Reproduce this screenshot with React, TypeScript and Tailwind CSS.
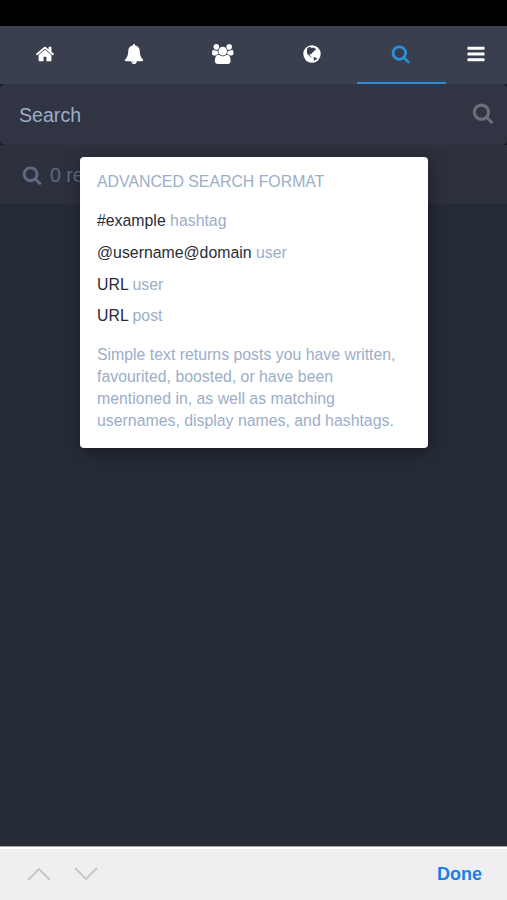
import type { ReactNode } from "react";

function Glyph({ className, viewBox = "0 0 1792 1792", children }: { className: string; viewBox?: string; children: ReactNode }) {
  return (
    <svg className={`block shrink-0 ${className}`} viewBox={viewBox} fill="currentColor" aria-hidden="true">
      {children}
    </svg>
  );
}

const SEARCH =
  "M1216 832q0-185-131.5-316.5t-316.5-131.5-316.5 131.5-131.5 316.5 131.5 316.5 316.5 131.5 316.5-131.5 131.5-316.5zm512 832q0 52-38 90t-90 38q-54 0-90-38l-343-342q-179 124-399 124-143 0-273.5-55.5t-225-150-150-225-55.5-273.5 55.5-273.5 150-225 225-150 273.5-55.5 273.5 55.5 225 150 150 225 55.5 273.5q0 220-124 399l343 343q37 37 37 90z";

function SearchIcon({ className }: { className: string }) {
  return (
    <Glyph className={className}>
      <path d={SEARCH} />
    </Glyph>
  );
}

function Tab({ active = false, children }: { active?: boolean; children: ReactNode }) {
  return (
    <a className={`flex h-[58px] flex-1 items-center justify-center border-b-2 ${active ? "border-[#2b90d9] text-[#2b90d9]" : "border-[#393f4f] text-white"}`}>
      {children}
    </a>
  );
}

function Hint({ term, kind }: { term: string; kind: string }) {
  return (
    <li className="h-[31.8px]">
      <span className="text-[#282c37]">{term}</span> {kind}
    </li>
  );
}

export default function App() {
  return (
    <div className="flex h-[900px] w-[507px] flex-col overflow-hidden bg-[#282c37] font-['Liberation_Sans',Arial,sans-serif]">
      <div className="h-[26px] shrink-0 bg-black" />
      <nav className="flex h-[58px] shrink-0 bg-[#393f4f]">
        <Tab>
          <Glyph className="size-[20px]">
            <path d="M1472 992v480q0 26-19 45t-45 19h-384v-384h-256v384h-384q-26 0-45-19t-19-45v-480q0-1 .5-3t.5-3l575-474 575 474q1 2 1 6zm223-69l-62 74q-8 9-21 11h-3q-13 0-21-7l-692-577-692 577q-12 8-24 7-13-2-21-11l-62-74q-8-10-7-23.5t11-21.5l719-599q32-26 76-26t76 26l244 204v-195q0-14 9-23t23-9h192q14 0 23 9t9 23v408l219 182q10 8 11 21.5t-7 23.5z" />
          </Glyph>
        </Tab>
        <Tab>
          <Glyph className="size-[20px]">
            <path d="M912 1696q0-16-16-16-59 0-101.5-42.5t-42.5-101.5q0-16-16-16t-16 16q0 73 51.5 124.5t124.5 51.5q16 0 16-16zm816-288q0 52-38 90t-90 38h-448q0 106-75 181t-181 75-181-75-75-181h-448q-52 0-90-38t-38-90q50-42 91-88t85-119.5 74.5-158.5 50-206 19.5-260q0-152 117-282.5t307-158.5q-8-19-8-39 0-40 28-68t68-28 68 28 28 68q0 20-8 39 190 28 307 158.5t117 282.5q0 139 19.5 260t50 206 74.5 158.5 85 119.5 91 88z" />
          </Glyph>
        </Tab>
        <Tab>
          <Glyph className="h-[20px] w-[21.5px]" viewBox="0 0 1920 1792">
            <path d="M593 896q-162 5-265 128h-134q-82 0-138-40.5t-56-118.5q0-353 124-353 6 0 43.5 21t97.5 42.5 119 21.5q67 0 133-23-5 37-5 66 0 139 81 256zm1071 637q0 120-73 189.5t-194 69.5h-874q-121 0-194-69.5t-73-189.5q0-53 3.5-103.5t14-109 26.5-108.5 43-97.5 62-81 85.5-53.5 111.5-20q10 0 43 21.5t73 48 107 48 135 21.5 135-21.5 107-48 73-48 43-21.5q61 0 111.5 20t85.5 53.5 62 81 43 97.5 26.5 108.5 14 109 3.5 103.5zm-1024-1277q0 106-75 181t-181 75-181-75-75-181 75-181 181-75 181 75 75 181zm704 384q0 159-112.5 271.5t-271.5 112.5-271.5-112.5-112.5-271.5 112.5-271.5 271.5-112.5 271.5 112.5 112.5 271.5zm576 225q0 78-56 118.5t-138 40.5h-134q-103-123-265-128 81-117 81-256 0-29-5-66 66 23 133 23 59 0 119-21.5t97.5-42.5 43.5-21q124 0 124 353zm-128-609q0 106-75 181t-181 75-181-75-75-181 75-181 181-75 181 75 75 181z" />
          </Glyph>
        </Tab>
        <Tab>
          <Glyph className="size-[18px]" viewBox="0 0 18 18">
            <circle cx="9" cy="9" r="8.7" />
            <path fill="#393f4f" d="M4.2 3.2 6.2 2l1.7.3.8 1 1.3-.7 1.5.5 1.7 1.1-.7.8-1.3.2.3 1-1.5.7-1 1.2-.7 1.2-1.2-.2-.7.8 1 .8.8 1.2 1.2.1-.2.6-1.7-.5-1.4-1.5-1.3-.9-.8-1.9-.1-2.2zM10.3 13l1.2-.7 1.8.5.8.8-1.8 1.6-1.6.5.3-1.5z" />
          </Glyph>
        </Tab>
        <Tab active>
          <SearchIcon className="mr-[1px] size-[19.5px]" />
        </Tab>
        <a className="flex h-[58px] w-[61px] items-center justify-center border-b-2 border-[#393f4f] pr-[1px] text-white">
          <Glyph className="size-[20px]">
            <path d="M1664 1344v128q0 26-19 45t-45 19h-1408q-26 0-45-19t-19-45v-128q0-26 19-45t45-19h1408q26 0 45 19t19 45zm0-512v128q0 26-19 45t-45 19h-1408q-26 0-45-19t-19-45v-128q0-26 19-45t45-19h1408q26 0 45 19t19 45zm0-512v128q0 26-19 45t-45 19h-1408q-26 0-45-19t-19-45v-128q0-26 19-45t45-19h1408q26 0 45 19t19 45z" />
          </Glyph>
        </a>
      </nav>

      <div className="shrink-0 bg-[#171b24]">
        <label className="flex h-[61px] items-center justify-between rounded-[5px] bg-[#313543] pr-[13px] pl-[19px]">
          <span className="pt-[2px] text-[19.6px] text-[#9baec8]">Search</span>
          <SearchIcon className="mb-[3px] size-[22px] text-[#696e7b]" />
        </label>
      </div>

      <main className="relative min-h-0 flex-1 bg-[#262c36]">
        <header className="flex h-[59px] items-center gap-[8px] bg-[#2d313d] pl-[22px] text-[19.6px] text-[#606984]">
          <SearchIcon className="size-[20px]" />
          <span className="pt-[2px]">0 results</span>
        </header>
        <section className="absolute top-[12px] left-[80px] h-[291px] w-[348px] rounded-[4px] bg-white px-[17px] pt-[14px] text-[15.85px] leading-[22px] text-[#9baec8] shadow-[2px_4px_18px_rgba(0,0,0,0.4)]">
          <h4 className="mb-[17px]">ADVANCED SEARCH FORMAT</h4>
          <ul className="mb-[7px]">
            <Hint term="#example" kind="hashtag" />
            <Hint term="@username@domain" kind="user" />
            <Hint term="URL" kind="user" />
            <Hint term="URL" kind="post" />
          </ul>
          <p>
            Simple text returns posts you have written,
            <br />
            favourited, boosted, or have been
            <br />
            mentioned in, as well as matching
            <br />
            usernames, display names, and hashtags.
          </p>
        </section>
      </main>

      <footer className="flex h-[54px] shrink-0 items-center justify-between border-t border-[#a4a6a9] bg-[#efeff1] pr-[25px] pl-[27px] shadow-[inset_0_2px_0_#fff]">
        <div className="flex gap-[23px] text-[#c5c6c8]">
          <svg className="block h-[14px] w-[24px]" viewBox="0 0 24 14" fill="none" stroke="currentColor" strokeWidth="1.8">
            <path d="M1 13 12 2l11 11" />
          </svg>
          <svg className="block h-[14px] w-[24px]" viewBox="0 0 24 14" fill="none" stroke="currentColor" strokeWidth="1.8">
            <path d="m1 1 11 11L23 1" />
          </svg>
        </div>
        <span className="pt-[2px] text-[18px] font-bold text-[#187fe9]">Done</span>
      </footer>
    </div>
  );
}
